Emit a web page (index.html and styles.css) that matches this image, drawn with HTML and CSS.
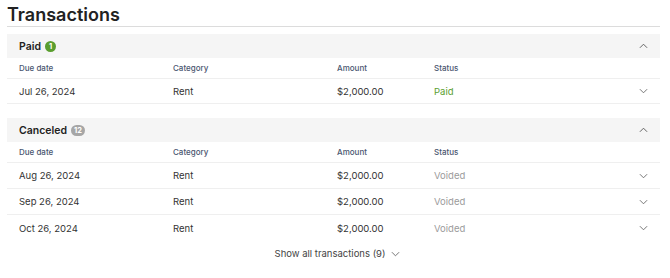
FILE: index.html
```html
<!DOCTYPE html>
<html>
<head>
<meta charset="utf-8">
<link rel="stylesheet" href="styles.css">
</head>
<body>
<div class="page">
  <h1 class="title">Transactions</h1>

  <section class="group">
    <div class="group-head">
      <span class="group-name">Paid</span>
      <span class="badge badge-green">1</span>
      <svg class="chev" viewBox="0 0 10 6" width="9" height="6"><path d="M1 5L5 1L9 5" fill="none" stroke="#555" stroke-width="1"/></svg>
    </div>
    <div class="row row-head">
      <span>Due date</span><span>Category</span><span>Amount</span><span>Status</span><span></span>
    </div>
    <div class="row">
      <span>Jul 26, 2024</span><span>Rent</span><span>$2,000.00</span><span class="st-paid">Paid</span>
      <svg class="chev" viewBox="0 0 10 6" width="9" height="6"><path d="M1 1L5 5L9 1" fill="none" stroke="#666" stroke-width="1"/></svg>
    </div>
  </section>

  <section class="group group-tall">
    <div class="group-head">
      <span class="group-name">Canceled</span>
      <span class="badge badge-gray">12</span>
      <svg class="chev" viewBox="0 0 10 6" width="9" height="6"><path d="M1 5L5 1L9 5" fill="none" stroke="#555" stroke-width="1"/></svg>
    </div>
    <div class="row row-head">
      <span>Due date</span><span>Category</span><span>Amount</span><span>Status</span><span></span>
    </div>
    <div class="row">
      <span>Aug 26, 2024</span><span>Rent</span><span>$2,000.00</span><span class="st-void">Voided</span>
      <svg class="chev" viewBox="0 0 10 6" width="9" height="6"><path d="M1 1L5 5L9 1" fill="none" stroke="#666" stroke-width="1"/></svg>
    </div>
    <div class="row">
      <span>Sep 26, 2024</span><span>Rent</span><span>$2,000.00</span><span class="st-void">Voided</span>
      <svg class="chev" viewBox="0 0 10 6" width="9" height="6"><path d="M1 1L5 5L9 1" fill="none" stroke="#666" stroke-width="1"/></svg>
    </div>
    <div class="row row-last">
      <span>Oct 26, 2024</span><span>Rent</span><span>$2,000.00</span><span class="st-void">Voided</span>
      <svg class="chev" viewBox="0 0 10 6" width="9" height="6"><path d="M1 1L5 5L9 1" fill="none" stroke="#666" stroke-width="1"/></svg>
    </div>
  </section>

  <div class="show-all">
    <span>Show all transactions (9)</span>
    <svg viewBox="0 0 10 6" width="9" height="6"><path d="M1 1L5 5L9 1" fill="none" stroke="#666" stroke-width="1"/></svg>
  </div>
</div>
</body>
</html>
```

FILE: styles.css
```css
* { box-sizing: border-box; }
html, body { margin: 0; padding: 0; background: #fff; }
body {
  font-family: Inter, "Noto Sans", sans-serif;
  color: #333;
}
.page {
  padding: 4px 10px 0 7px;
}
.title {
  margin: 0;
  font-size: 18px;
  font-weight: 600;
  line-height: 21px;
  color: #222;
  padding-bottom: 1px;
  border-bottom: 1px solid #dcdcdc;
}
.group { margin-top: 7px; }
.group + .group { margin-top: 14px; }
.group-head {
  display: flex;
  align-items: center;
  gap: 4px;
  height: 24px;
  padding: 0 12px;
  background: #f5f5f5;
}
.group-name {
  font-size: 10.5px;
  font-weight: 600;
  color: #222;
}
.badge {
  display: inline-flex;
  align-items: center;
  justify-content: center;
  min-width: 11px;
  height: 11px;
  padding: 0 2px;
  border-radius: 6px;
  color: #fff;
  font-size: 7.5px;
  font-weight: 700;
}
.badge-green { background: #5a9e2f; }
.badge-gray { background: #a6a6a6; min-width: 14px; }
.group-head .chev { margin-left: auto; margin-right: 0; }
.row {
  display: grid;
  grid-template-columns: 154px 164px 97px 1fr 24px;
  align-items: center;
  height: 25px;
  padding: 0 0 0 12px;
  font-size: 9.5px;
  color: #333;
  border-bottom: 1px solid #efefef;
}
.row-head {
  height: 21px;
  font-size: 8px;
  font-weight: 500;
  color: #4a5670;
}
.group-tall .row { height: 26px; }
.group-tall .row-head { height: 21px; }
.row-last { border-bottom: none; }
.row .chev { justify-self: start; margin-left: 3px; }
.st-paid { color: #5a9e2f; }
.st-void { color: #9b9b9b; }
.show-all {
  display: flex;
  justify-content: center;
  align-items: center;
  gap: 6px;
  margin-top: 7px;
  font-size: 9.5px;
  color: #444;
  padding-left: 8px;
}
```
